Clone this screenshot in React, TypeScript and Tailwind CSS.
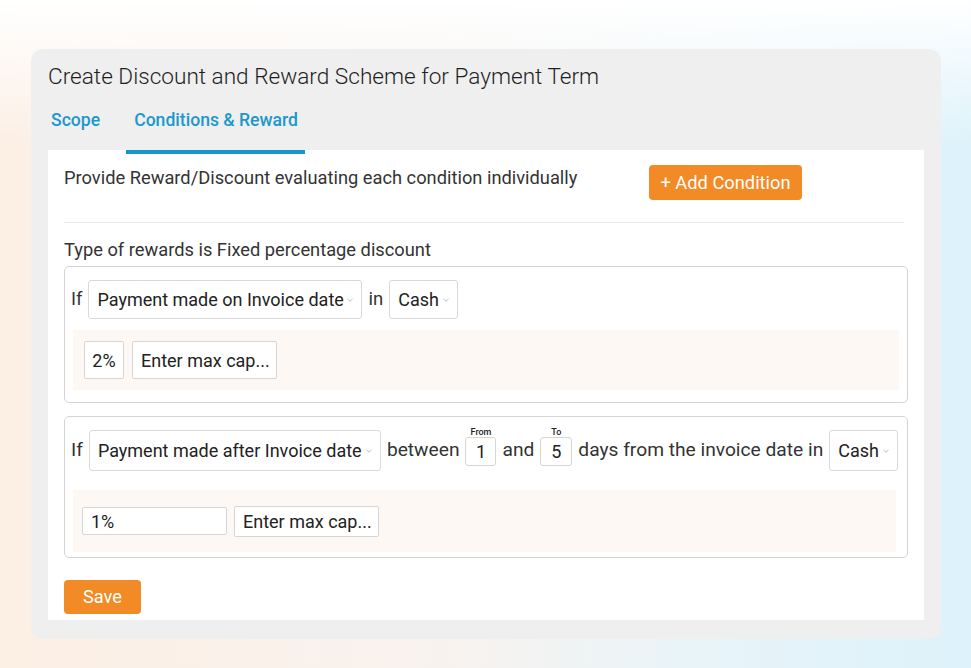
import React from "react";

const Chevron = () => (
  <svg width="8" height="6" viewBox="0 0 8 6" className="shrink-0">
    <path d="M1.5 1.8 L4 4.2 L6.5 1.8" fill="none" stroke="#b5b5b5" strokeWidth="0.9" />
  </svg>
);

const Select = ({ label, className }: { label: string; className: string }) => (
  <div
    className={`flex shrink-0 items-center justify-between rounded-[3px] border border-[#d9d9d9] bg-white pl-[8px] pr-[7px] text-[18px] text-[#222] ${className}`}
  >
    <span>{label}</span>
    <Chevron />
  </div>
);

const Box = ({ value, className }: { value: string; className: string }) => (
  <div
    className={`flex shrink-0 items-center rounded-[2px] border border-[#d6d6d6] bg-white text-[18px] text-[#222] ${className}`}
  >
    {value}
  </div>
);

const DayInput = ({ label, value, w }: { label: string; value: string; w: string }) => (
  <div className={`relative mt-[1px] shrink-0 ${w}`}>
    <span className="absolute -top-[10px] left-0 right-0 text-center text-[9px] font-medium leading-[10px] text-[#222]">
      {label}
    </span>
    <div className="flex h-[29px] items-center justify-center rounded-[3px] border border-[#d6d6d6] bg-white text-[18px] text-[#222]">
      {value}
    </div>
  </div>
);

export default function App() {
  return (
    <div
      className="flex h-[668px] w-[971px] justify-start bg-[linear-gradient(to_bottom,#ffffff_0%,rgba(255,255,255,0)_22%),linear-gradient(to_right,#fcefe4_0%,#f8f2ee_45%,#e9f4f8_70%,#ddf2fb_100%)] pl-[31px] pt-[49px]"
      style={{ fontFamily: "Roboto, 'Liberation Sans', sans-serif" }}
    >
      <div className="flex h-[590px] w-[910px] flex-col rounded-[12px] bg-[#efefef] px-[17px]">
        <h1 className="mt-[14px] shrink-0 text-[22.6px] font-light leading-[28px] text-[#1f1f1f]">
          Create Discount and Reward Scheme for Payment Term
        </h1>
        <div className="mt-[17px] flex h-[42px] shrink-0 items-start text-[17.6px] font-medium leading-[24px] text-[#1b98cc]">
          <span className="ml-[3px]">Scope</span>
          <span className="ml-[34px]">Conditions &amp; Reward</span>
        </div>
        <div className="flex h-[470px] w-[876px] shrink-0 flex-col bg-white px-[16px]">
          <div className="ml-[62px] h-[4px] w-[179px] shrink-0 bg-[#1596cf]" />
          <div className="mt-[11px] flex shrink-0 items-start">
            <span className="w-[585px] pt-[1px] text-[18.3px] leading-[24px] text-[#333]">
              Provide Reward/Discount evaluating each condition individually
            </span>
            <button className="flex h-[35px] w-[153px] items-center justify-center rounded-[4px] bg-[#f28a26] text-[18.3px] text-white">
              + Add Condition
            </button>
          </div>
          <div className="mr-[4px] mt-[22px] h-px shrink-0 bg-[#e6e6e6]" />
          <div className="mt-[15px] shrink-0 text-[18.3px] leading-[24px] text-[#333]">
            Type of rewards is Fixed percentage discount
          </div>

          <div className="mt-[4px] flex shrink-0 flex-col rounded-[5px] border border-[#d4d4d4] pb-[12px] pl-[6px] pr-[8px] pt-[13px]">
            <div className="flex items-center gap-[6px] whitespace-nowrap text-[18.5px] text-[#333]">
              <span>If</span>
              <Select label="Payment made on Invoice date" className="h-[39px] w-[274px]" />
              <span>in</span>
              <Select label="Cash" className="h-[39px] w-[69px]" />
            </div>
            <div className="ml-[2px] mt-[11px] flex h-[60px] items-center gap-[8px] bg-[#fdf8f3] pl-[11px]">
              <Box value="2%" className="h-[38px] w-[40px] justify-center" />
              <Box value="Enter max cap..." className="h-[38px] w-[145px] pl-[8px]" />
            </div>
          </div>

          <div className="mt-[13px] flex shrink-0 flex-col rounded-[5px] border border-[#d4d4d4] pb-[5px] pl-[6px] pr-[8px] pt-[13px]">
            <div className="flex items-center gap-[6px] whitespace-nowrap text-[19.2px] text-[#333]">
              <span>If</span>
              <Select label="Payment made after Invoice date" className="h-[41px] w-[292px]" />
              <span>between</span>
              <DayInput label="From" value="1" w="w-[31px]" />
              <span>and</span>
              <DayInput label="To" value="5" w="w-[32px]" />
              <span>days from the invoice date in</span>
              <Select label="Cash" className="h-[41px] w-[69px]" />
            </div>
            <div className="ml-[2px] mr-[3px] mt-[19px] flex h-[62px] items-center gap-[7px] bg-[#fdf8f3] pl-[9px]">
              <Box value="1%" className="h-[28px] w-[145px] pl-[8px]" />
              <Box value="Enter max cap..." className="h-[31px] w-[145px] pl-[8px]" />
            </div>
          </div>

          <button className="mt-[22px] flex h-[34px] w-[77px] shrink-0 items-center justify-center rounded-[4px] bg-[#f28a26] text-[18.3px] text-white">
            Save
          </button>
        </div>
      </div>
    </div>
  );
}
